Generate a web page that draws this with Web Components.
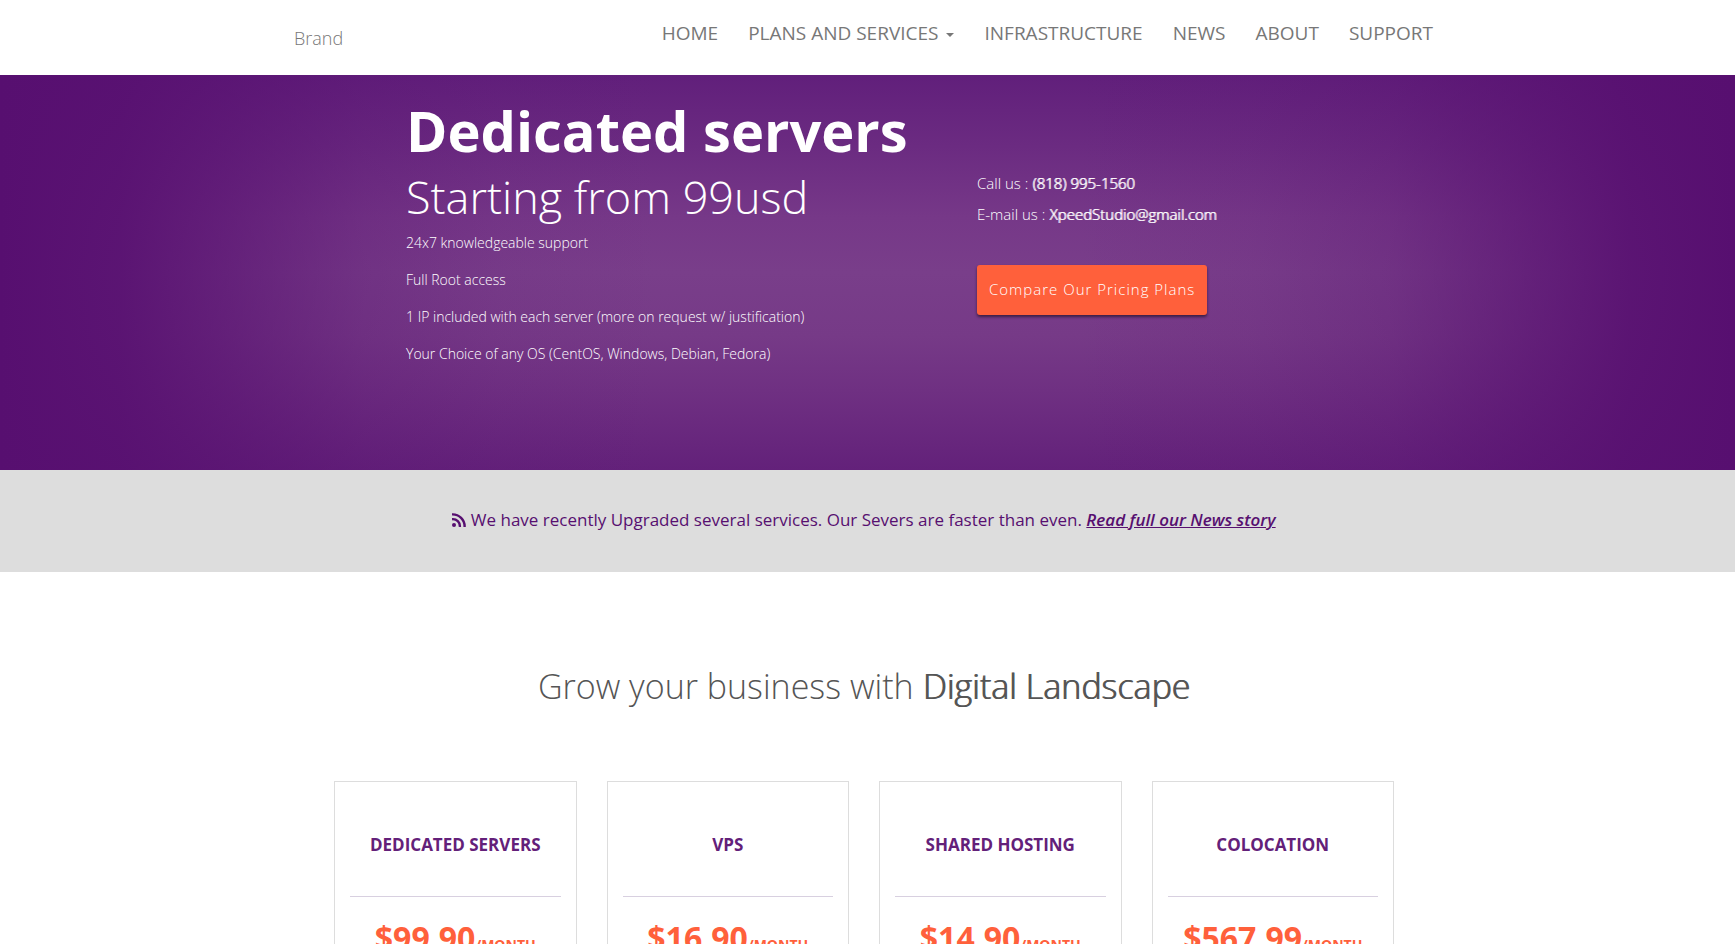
<!DOCTYPE html>
<html lang="en">
<head>
<meta charset="utf-8">
<title>Dedicated servers</title>
<style>
body { margin: 0; background: #fff; color: #555; font-family: "Open Sans", sans-serif; font-weight: 300; font-size: 14px; overflow-x: hidden; }
</style>
</head>
<body>
<site-header>
  <nav-item href="#home">HOME</nav-item>
  <nav-item href="#plans" caret>PLANS AND SERVICES</nav-item>
  <nav-item href="#infrastructure">INFRASTRUCTURE</nav-item>
  <nav-item href="#news">NEWS</nav-item>
  <nav-item href="#about">ABOUT</nav-item>
  <nav-item href="#support">SUPPORT</nav-item>
</site-header>
<main>
  <hero-banner></hero-banner>
  <news-bar></news-bar>
  <plan-section>
    <plan-card name="DEDICATED SERVERS" price="$99.90"></plan-card>
    <plan-card name="VPS" price="$16.90"></plan-card>
    <plan-card name="SHARED HOSTING" price="$14.90"></plan-card>
    <plan-card name="COLOCATION" price="$567.99"></plan-card>
  </plan-section>
</main>
<script>
const define = (name, render) => customElements.define(name, class extends HTMLElement {
  constructor() {
    super();
    this.attachShadow({ mode: 'open' });
  }
  connectedCallback() {
    this.shadowRoot.innerHTML = render(this);
  }
});

define('site-header', () => `
<style>
  :host { display: block; padding-right: 7px; }
  header { box-sizing: border-box; max-width: 1170px; height: 75px; margin: 0 auto; padding: 0 16px 0 15px; display: flex; justify-content: space-between; }
  .brand { color: #777; text-decoration: none; font-size: 18px; line-height: 20px; padding-top: 28px; }
  nav { display: flex; gap: 30px; padding-top: 20px; }
</style>
<header><a class="brand" href="#">Brand</a><nav><slot></slot></nav></header>`);

define('nav-item', el => `
<style>
  :host { display: block; }
  a { color: #777; text-decoration: none; font: 400 19px/26px "Open Sans", sans-serif; white-space: nowrap; }
  .caret { display: inline-block; margin-left: 8px; vertical-align: middle; border-top: 4px solid; border-left: 4px solid transparent; border-right: 4px solid transparent; }
</style>
<a href="${el.getAttribute('href')}"><slot></slot>${el.hasAttribute('caret') ? '<span class="caret"></span>' : ''}</a>`);

define('hero-banner', () => `
<style>
  :host { display: block; color: #fff; padding-right: 7px;
    background:
      linear-gradient(90deg, rgb(87 15 112) 0%, rgb(87 15 112 / .88) 7%, rgb(87 15 112 / .62) 13%, rgb(87 15 112 / .25) 21%, rgb(87 15 112 / .08) 29%, rgb(87 15 112 / 0) 38%, rgb(87 15 112 / 0) 62%, rgb(87 15 112 / .08) 72%, rgb(87 15 112 / .25) 80%, rgb(87 15 112 / .62) 88%, rgb(87 15 112 / .88) 94%, rgb(87 15 112) 100%),
      linear-gradient(180deg, #611f7b 0%, #6b2b81 18%, #763888 36%, #793e8a 50%, #763a87 66%, #6f3082 80%, #63217a 100%); }
  .inner { box-sizing: border-box; max-width: 1170px; min-height: 395px; margin: 0 auto; padding: 15px 15px 0 127px; display: grid; grid-template-columns: 571px 1fr; }
  h1 { margin: 0; font-size: 56px; line-height: 80px; font-weight: 700; }
  h2 { margin: 0; font-size: 45px; line-height: 54px; font-weight: 300; }
  ul { list-style: none; margin: 0; padding: 0; }
  li { font-size: 14px; line-height: 37px; }
  .contact { padding-top: 78px; }
  p { margin: 0; font-size: 15px; line-height: 31px; }
  strong { font-weight: 300; text-shadow: 1px 0 currentColor; }
  button { margin-top: 35px; height: 50px; padding: 0 12px 2px; border: 0; border-radius: 3px; background: #ff603b; color: #fff; font: 300 15px "Open Sans", sans-serif; letter-spacing: 1px; box-shadow: 0 2px 3px rgba(0,0,0,.5); }
</style>
<section class="inner">
  <div>
    <h1>Dedicated servers</h1>
    <h2>Starting from 99usd</h2>
    <ul>
      <li>24x7 knowledgeable support</li>
      <li>Full Root access</li>
      <li>1 IP included with each server (more on request w/ justification)</li>
      <li>Your Choice of any OS (CentOS, Windows, Debian, Fedora)</li>
    </ul>
  </div>
  <div class="contact">
    <p>Call us : <strong>(818) 995-1560</strong></p>
    <p>E-mail us : <strong>XpeedStudio@gmail.com</strong></p>
    <button type="button">Compare Our Pricing Plans</button>
  </div>
</section>`);

define('news-bar', () => `
<style>
  :host { display: block; background: #ddd; color: #570f70; padding: 37px 7px 39px 0; text-align: center; font: 400 17px/26px "Open Sans", sans-serif; }
  p { margin: 0; }
  svg { width: 14px; height: 14px; vertical-align: -1px; }
  a { color: inherit; font-weight: 600; font-style: italic; }
</style>
<p><svg viewBox="0 0 14 14" fill="none" stroke="currentColor" aria-hidden="true"><circle cx="2" cy="12" r="2" fill="currentColor" stroke="none"/><path stroke-width="2.4" d="M0 6.2A7 7 0 0 1 7.8 14M0 1.4A12 12 0 0 1 12.6 14"/></svg> We have recently Upgraded several services. Our Severs are faster than even. <a href="#news">Read full our News story</a></p>`);

define('plan-section', () => `
<style>
  :host { display: block; padding: 88px 7px 0 0; }
  h2 { margin: 0; text-align: center; font-size: 34px; line-height: 52px; font-weight: 300; color: #555; }
  h2 b { font-weight: 300; text-shadow: 1px 0 currentColor; }
  .grid { max-width: 1060px; margin: 69px auto 0; display: grid; grid-template-columns: repeat(4, 1fr); gap: 30px; }
</style>
<h2>Grow your business with <b>Digital Landscape</b></h2>
<div class="grid"><slot></slot></div>`);

define('plan-card', el => `
<style>
  :host { display: block; border: 1px solid #ddd; padding: 47px 15px 30px; text-align: center; }
  h3 { margin: 0; color: #632079; font-size: 17px; line-height: 32px; font-weight: 700; padding-bottom: 35px; border-bottom: 1px solid #d8d0e0; }
  p { margin: 18px 0 0; color: #ff603b; font-size: 32px; line-height: 46px; font-weight: 700; white-space: nowrap; }
  small { font-size: 14px; }
</style>
<h3>${el.getAttribute('name')}</h3>
<p>${el.getAttribute('price')}<small>/MONTH</small></p>`);
</script>
</body>
</html>
